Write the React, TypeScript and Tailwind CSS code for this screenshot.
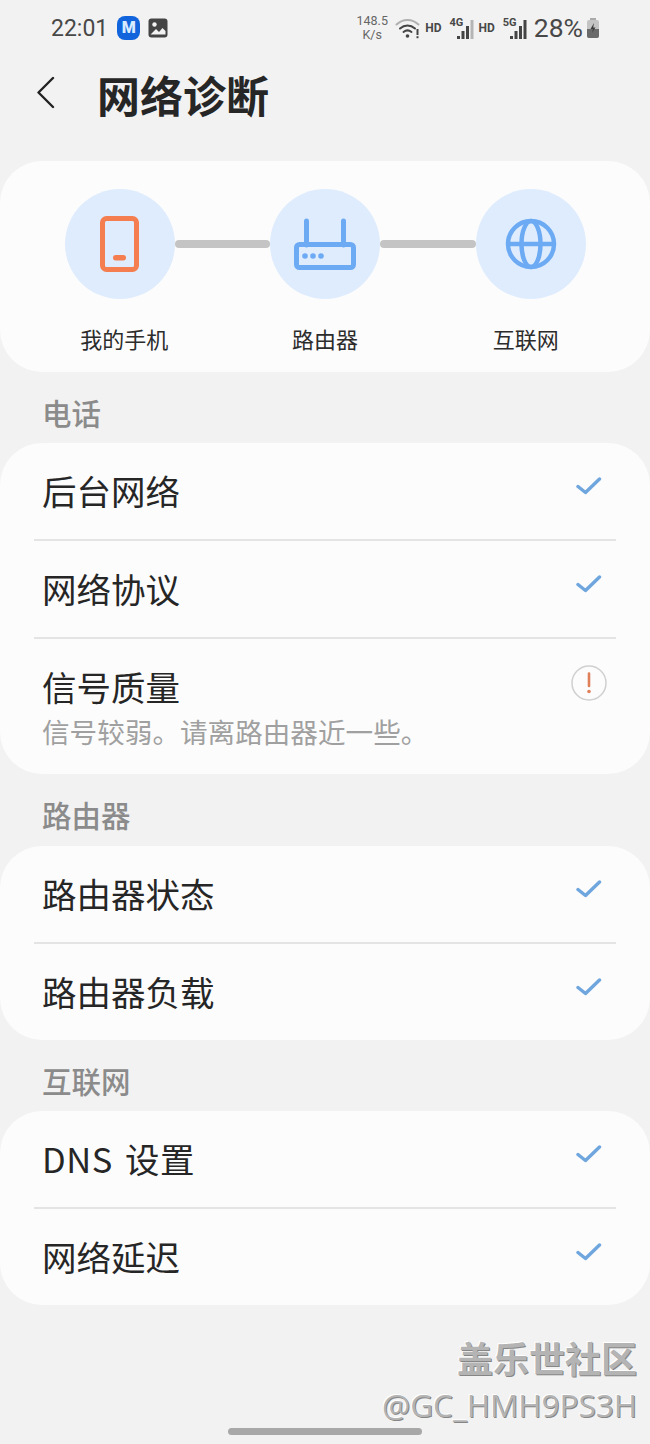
import React from "react";

const cjk = "font-['Noto_Sans_CJK_SC','Noto_Sans',sans-serif]";

function Check() {
  return (
    <svg width="26" height="20" viewBox="0 0 26 20" fill="none" className="mb-[10px] mr-[-1px]">
      <path d="M2 10.5L9.5 16.5L23.5 3" stroke="#6fa6de" strokeWidth="3.4" strokeLinecap="round" strokeLinejoin="round" />
    </svg>
  );
}

function Row({ children }: { children: React.ReactNode }) {
  return (
    <div className="flex h-[96px] items-center justify-between pl-[42px] pr-[49px]">
      <span className="mt-[-1px] text-[34.5px] leading-none text-[#262626]">{children}</span>
      <Check />
    </div>
  );
}

function Divider() {
  return <div className="mx-[34px] h-[2px] bg-[#e4e4e4]" />;
}

function SectionLabel({ text, h = "h-[71px]" }: { text: string; h?: string }) {
  return (
    <div className={`flex items-center pl-[42px] pt-[10px] text-[29.5px] font-medium leading-none text-[#8b8b8b] ${h}`}>
      {text}
    </div>
  );
}

function Card({ children }: { children: React.ReactNode }) {
  return <div className="rounded-[42px] bg-[#fcfcfc]">{children}</div>;
}

function Circle({ children }: { children: React.ReactNode }) {
  return (
    <div className="flex h-[110px] w-[110px] shrink-0 items-center justify-center rounded-full bg-[#deecfd]">
      {children}
    </div>
  );
}

function Connector() {
  return <div className="h-[8px] flex-1 rounded-full bg-[#c4c4c4]" />;
}

function Signal({ gray = false }: { gray?: boolean }) {
  return (
    <svg width="19" height="26" viewBox="0 0 19 26" className="ml-[-3px]">
      <rect x="0" y="21" width="3" height="3" fill="#444" />
      <rect x="4.5" y="16" width="3" height="8" fill="#444" />
      <rect x="9" y="11" width="3" height="13" fill="#444" />
      <rect x="13.5" y="5" width="3" height="19" fill={gray ? "#b5b5b5" : "#444"} />
    </svg>
  );
}

export default function App() {
  return (
    <div className={`relative h-[1444px] w-[650px] overflow-hidden bg-[#f2f2f2] ${cjk}`}>
      {/* status bar */}
      <div className="flex h-[56px] items-center justify-between pl-[51px] pr-[50px] text-[#484848]">
        <div className="flex items-center">
          <span className="font-['Roboto',sans-serif] text-[23px] leading-none">22:01</span>
          <div className="ml-[9px] flex h-[24px] w-[23px] items-center justify-center rounded-[8px] bg-[#1264dc] font-['Roboto',sans-serif] text-[16px] font-black leading-none text-[#d8ecff]">
            M
          </div>
          <svg width="20" height="20" viewBox="0 0 20 20" className="ml-[8px]">
            <rect x="0.5" y="0.5" width="19" height="19" rx="3" fill="#444" />
            <circle cx="6.5" cy="6.5" r="2.2" fill="#f2f2f2" />
            <path d="M2.5 16.5L8 11l3 3 3.5-4 3 3v3.5z" fill="#f2f2f2" />
          </svg>
        </div>
        <div className="flex items-center font-['Roboto',sans-serif]">
          <div className="flex w-[32px] flex-col items-center text-[12.5px] leading-[14px] text-[#666]">
            <span>148.5</span>
            <span>K/s</span>
          </div>
          <svg width="26" height="22" viewBox="0 0 26 22" fill="none" className="ml-[7px]">
            <path d="M1.5 7.5C8 1.5 17 1.5 23.5 7.5" stroke="#b0b0b0" strokeWidth="2" strokeLinecap="round" />
            <path d="M5 11.5C9.5 7.5 15.5 7.5 20 11.5" stroke="#444" strokeWidth="2" strokeLinecap="round" />
            <path d="M8.5 15C11 13 14 13 16.5 15" stroke="#444" strokeWidth="2" strokeLinecap="round" />
            <circle cx="12.5" cy="19" r="1.8" fill="#444" />
            <rect x="21.5" y="12" width="2" height="6" fill="#444" />
            <rect x="21.5" y="19.2" width="2" height="2" fill="#444" />
          </svg>
          <span className="ml-[4px] text-[12px] font-bold leading-none">HD</span>
          <div className="relative ml-[8px] flex h-[26px] w-[26px] justify-end">
            <span className="absolute left-0 top-[2px] text-[11px] font-bold leading-none">4G</span>
            <Signal gray />
          </div>
          <span className="ml-[3px] text-[12px] font-bold leading-none">HD</span>
          <div className="relative ml-[8px] flex h-[26px] w-[26px] justify-end">
            <span className="absolute left-0 top-[2px] text-[11px] font-bold leading-none">5G</span>
            <Signal />
          </div>
          <span className="ml-[5px] text-[26.5px] leading-none">28%</span>
          <svg width="14" height="20" viewBox="0 0 14 20" className="ml-[3px]">
            <rect x="4" y="0" width="6" height="2" fill="#aaa" />
            <rect x="1" y="2" width="12" height="18" rx="2" fill="#c4c4c4" />
            <path d="M1 11h12v7a2 2 0 0 1-2 2H3a2 2 0 0 1-2-2z" fill="#6a6a6a" />
            <path d="M8 5L4.5 11H7l-1 4 3.5-5.5H7.2z" fill="#3c3c3c" />
          </svg>
        </div>
      </div>

      {/* header */}
      <div className="flex h-[76px] items-center pl-[37px]">
        <svg width="18" height="33" viewBox="0 0 18 33" fill="none" className="mt-[-3px]">
          <path d="M16 2L1.5 16.5L16 31" stroke="#222" strokeWidth="2.4" strokeLinecap="round" strokeLinejoin="round" />
        </svg>
        <h1 className="ml-[42px] text-[43px] font-bold leading-none text-[#262626]">网络诊断</h1>
      </div>

      <div className="mt-[29px]">
        {/* topology card */}
        <div className="h-[211px] rounded-[42px] bg-[#fcfcfc] pt-[28px]">
          <div className="flex items-center px-[64.5px]">
            <Circle>
              <svg width="40" height="56" viewBox="0 0 40 56" fill="none">
                <rect x="2.5" y="2.5" width="34" height="51" rx="4" stroke="#f47e50" strokeWidth="5" />
                <rect x="13" y="39" width="13" height="5.5" rx="2.75" fill="#f47e50" />
              </svg>
            </Circle>
            <Connector />
            <Circle>
              <svg width="62" height="52" viewBox="0 0 62 52" fill="none">
                <path d="M12.5 3V27M49.5 3V27" stroke="#6daaf4" strokeWidth="5" strokeLinecap="round" />
                <rect x="2.5" y="26.5" width="57" height="23" rx="3" stroke="#6daaf4" strokeWidth="5" />
                <circle cx="11" cy="38" r="2.8" fill="#6daaf4" />
                <circle cx="19" cy="38" r="2.8" fill="#6daaf4" />
                <circle cx="27" cy="38" r="2.8" fill="#6daaf4" />
              </svg>
            </Circle>
            <Connector />
            <Circle>
              <svg width="54" height="54" viewBox="0 0 54 54" fill="none" stroke="#6daaf4" strokeWidth="4.5">
                <circle cx="27" cy="27" r="23" />
                <ellipse cx="27" cy="27" rx="9.5" ry="23" />
                <path d="M4 27H50" />
              </svg>
            </Circle>
          </div>
          <div className="mt-[25px] grid grid-cols-3 px-[24px] text-center text-[22px] leading-[28px] text-[#2c2c2c]">
            <span>我的手机</span>
            <span>路由器</span>
            <span>互联网</span>
          </div>
        </div>

        <SectionLabel text="电话" />
        <Card>
          <Row>后台网络</Row>
          <Divider />
          <Row>网络协议</Row>
          <Divider />
          <div className="flex h-[135px] justify-between pl-[42px] pr-[43px] pt-[25px]">
            <div className="flex flex-col">
              <span className="text-[34.5px] leading-[44px] text-[#262626]">信号质量</span>
              <span className="mt-[4px] text-[27.6px] leading-[38px] text-[#a0a0a0]">信号较弱。请离路由器近一些。</span>
            </div>
            <svg width="36" height="36" viewBox="0 0 36 36" fill="none" className="mt-[1px]">
              <circle cx="18" cy="18" r="17" stroke="#d0d0d0" strokeWidth="1.5" />
              <path d="M18 8.5V21" stroke="#e0805a" strokeWidth="2.6" strokeLinecap="round" />
              <circle cx="18" cy="26.5" r="1.8" fill="#e0805a" />
            </svg>
          </div>
        </Card>

        <SectionLabel text="路由器" h="h-[72px]" />
        <Card>
          <Row>路由器状态</Row>
          <Divider />
          <Row>路由器负载</Row>
        </Card>

        <SectionLabel text="互联网" />
        <Card>
          <Row>
            <span className="tracking-[0.5px] [word-spacing:4px]">DNS 设置</span>
          </Row>
          <Divider />
          <Row>网络延迟</Row>
        </Card>
      </div>

      {/* watermark */}
      <div className="absolute right-[13px] top-[1334px] flex flex-col items-end text-[#b4b4b4] [text-shadow:1px_1px_0_#868686,-1px_-1px_0_#ffffff]">
        <span className="text-[36px] font-bold leading-[46px]">盖乐世社区</span>
        <span className="font-['Open_Sans',sans-serif] mt-[5px] text-[31.5px] leading-[40px]">@GC_HMH9PS3H</span>
      </div>

      {/* home indicator */}
      <div className="absolute bottom-[9px] left-[228px] h-[7px] w-[194px] rounded-full bg-[#a8a8a8]" />
    </div>
  );
}
